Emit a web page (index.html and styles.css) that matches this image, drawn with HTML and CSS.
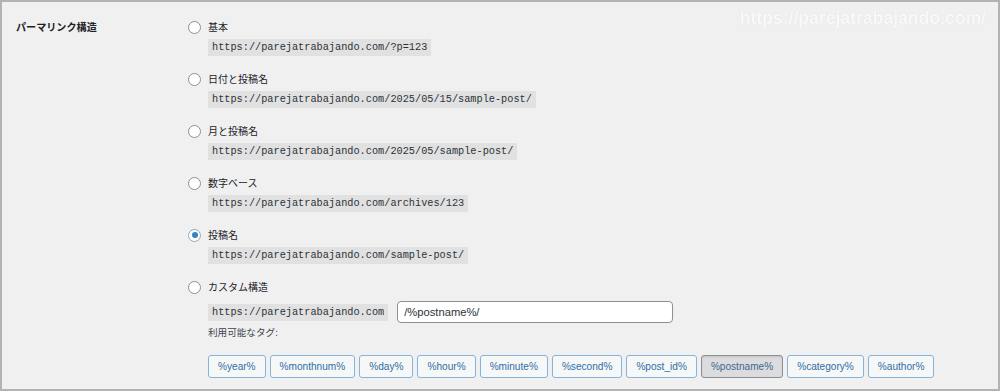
FILE: index.html
```html
<!DOCTYPE html>
<html lang="ja">
<head>
<meta charset="utf-8">
<title>パーマリンク構造</title>
<link rel="stylesheet" href="styles.css">
</head>
<body>
<div class="frame">
  <div class="watermark">https://parejatrabajando.com/</div>
  <div class="form-row">
    <div class="th">パーマリンク構造</div>
    <div class="td">
      <div class="opt">
        <label class="radio-line"><input type="radio" name="pl" class="radio"><span>基本</span></label>
        <code class="code">https://parejatrabajando.com/?p=123</code>
      </div>
      <div class="opt">
        <label class="radio-line"><input type="radio" name="pl" class="radio"><span>日付と投稿名</span></label>
        <code class="code">https://parejatrabajando.com/2025/05/15/sample-post/</code>
      </div>
      <div class="opt">
        <label class="radio-line"><input type="radio" name="pl" class="radio"><span>月と投稿名</span></label>
        <code class="code">https://parejatrabajando.com/2025/05/sample-post/</code>
      </div>
      <div class="opt">
        <label class="radio-line"><input type="radio" name="pl" class="radio"><span>数字ベース</span></label>
        <code class="code">https://parejatrabajando.com/archives/123</code>
      </div>
      <div class="opt">
        <label class="radio-line"><input type="radio" name="pl" class="radio" checked><span>投稿名</span></label>
        <code class="code">https://parejatrabajando.com/sample-post/</code>
      </div>
      <div class="opt custom">
        <label class="radio-line"><input type="radio" name="pl" class="radio"><span>カスタム構造</span></label>
        <div class="custom-row">
          <code class="code">https://parejatrabajando.com</code>
          <input class="text-input" type="text" value="/%postname%/">
        </div>
        <div class="avail">利用可能なタグ:</div>
        <div class="tags">
          <button class="tag">%year%</button>
          <button class="tag">%monthnum%</button>
          <button class="tag">%day%</button>
          <button class="tag">%hour%</button>
          <button class="tag">%minute%</button>
          <button class="tag">%second%</button>
          <button class="tag">%post_id%</button>
          <button class="tag active">%postname%</button>
          <button class="tag">%category%</button>
          <button class="tag">%author%</button>
        </div>
      </div>
    </div>
  </div>
</div>
</body>
</html>
```
FILE: styles.css
```css
html, body {
  margin: 0;
  padding: 0;
  background: #f0f0f1;
}

.frame {
  position: relative;
  box-sizing: border-box;
  width: 1000px;
  height: 391px;
  border: 2px solid #b3b3b4;
  background: #f0f0f1;
  font-family: "Noto Sans CJK JP", "Liberation Sans", sans-serif;
  color: #1d2327;
  overflow: hidden;
}

.watermark {
  position: absolute;
  top: 5px;
  right: 12px;
  font-family: "Liberation Sans", Arial, sans-serif;
  font-weight: 700;
  font-size: 17.6px;
  line-height: 22px;
  color: #f9f9f9;
  text-shadow: 0 0 1px rgba(0, 0, 0, 0.1);
}

.form-row {
  display: flex;
  padding-top: 17px;
}

.th {
  box-sizing: border-box;
  width: 186px;
  flex: none;
  padding-left: 14px;
  font-size: 10.1px;
  font-weight: 600;
  line-height: 16px;
}

.td {
  display: flex;
  flex-direction: column;
}

.opt {
  display: flex;
  flex-direction: column;
  align-items: flex-start;
  margin-bottom: 15px;
}

.radio-line {
  display: flex;
  align-items: center;
  height: 16px;
  font-size: 10px;
  line-height: 16px;
}

.radio {
  appearance: none;
  -webkit-appearance: none;
  box-sizing: border-box;
  width: 13px;
  height: 13px;
  margin: 0 7px 0 0;
  border: 1px solid #8c8f94;
  border-radius: 50%;
  background: #fff;
  display: flex;
  align-items: center;
  justify-content: center;
}

.radio:checked {
  border-color: #8fa9c2;
}

.radio:checked::before {
  content: "";
  width: 6px;
  height: 6px;
  border-radius: 50%;
  background: #3582c4;
}

.code {
  margin: 4px 0 0 20px;
  padding: 0 4px;
  background: #e1e1e2;
  color: #2c3338;
  font-family: "Liberation Mono", "DejaVu Sans Mono", monospace;
  font-size: 10.25px;
  line-height: 17px;
}

.custom-row {
  display: flex;
  align-items: center;
  margin: 6px 0 0 20px;
  gap: 9px;
}

.custom-row .code {
  margin: 0;
}

.text-input {
  box-sizing: border-box;
  width: 276px;
  height: 22px;
  margin: 0;
  padding: 0 6px;
  border: 1px solid #8c8f94;
  border-radius: 4px;
  background: #fff;
  color: #2c3338;
  font-family: "Liberation Sans", Arial, sans-serif;
  font-size: 11.2px;
}

.avail {
  margin: 1px 0 0 20px;
  font-size: 9.6px;
  line-height: 16px;
  color: #3c434a;
}

.tags {
  display: flex;
  gap: 4px;
  margin: 15px 0 0 20px;
}

.tag {
  box-sizing: border-box;
  height: 23px;
  margin: 0;
  padding: 0 9px;
  border: 1px solid #86b4dc;
  border-radius: 3px;
  background: #f6f7f7;
  color: #2f6fa7;
  font-family: "Liberation Sans", Arial, sans-serif;
  font-size: 10.1px;
  line-height: 21px;
  cursor: pointer;
}

.tag.active {
  background: #dcdcde;
  border-color: #8c8f94;
  color: #3a6892;
  box-shadow: inset 0 1px 2px rgba(0, 0, 0, 0.12);
}
```
